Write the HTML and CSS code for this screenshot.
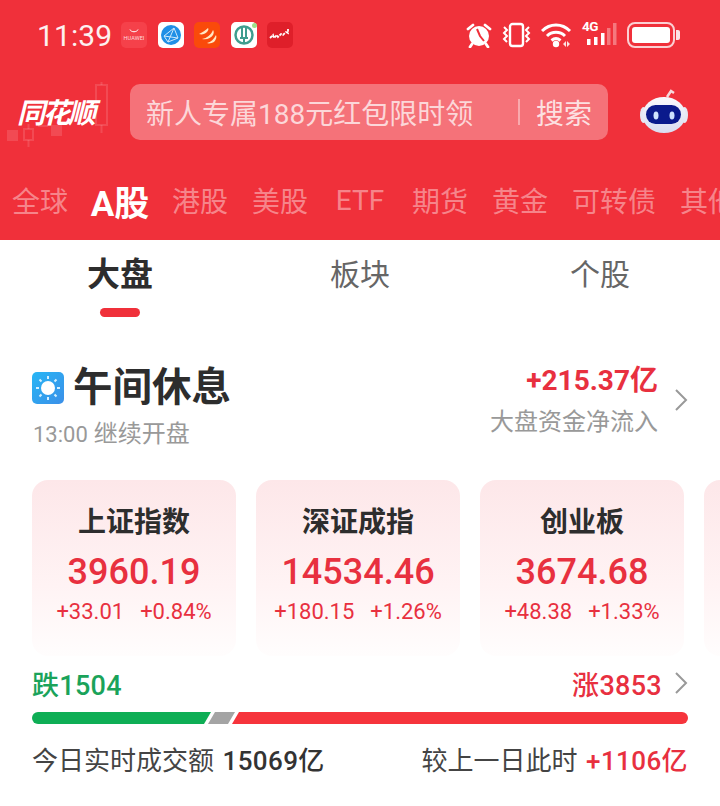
FILE: index.html
```html
<!DOCTYPE html>
<html lang="zh-CN">
<head>
<meta charset="utf-8">
<title>同花顺</title>
<link rel="stylesheet" href="styles.css">
</head>
<body>
<div class="page">
  <header class="hero">
    <div class="status">
      <span class="time">11:39</span>
      <div class="apps">
        <span class="app app-huawei"><svg width="14" height="6" viewBox="0 0 14 6"><path d="M3 0.5c1 3 7 3 8 0" fill="none" stroke="#fff" stroke-width="1"/></svg><i class="app-name">HUAWEI</i></span>
        <span class="app app-white"><svg width="24" height="24" viewBox="0 0 24 24"><circle cx="12" cy="12" r="10" fill="#1f8fe6"/><path d="M5 13L15 5L19 15L9 19ZM5 13L19 15M15 5L9 19" fill="none" stroke="#cfe9fb" stroke-width="1"/></svg></span>
        <span class="app app-orange"><svg width="26" height="26" viewBox="0 0 26 26"><path d="M5 12c4-2 7-4 9-6 1 1 0 3-1 4-2 2-5 3-8 2zM8 17c5-1 9-4 11-9 1 1 1 3 0 5-2 3-6 5-11 4zM13 21c4-1 7-4 9-8 1 2 0 5-2 7-2 1-5 2-7 1z" fill="#ffe9c4"/></svg></span>
        <span class="app app-white app-dot"><svg width="24" height="24" viewBox="0 0 24 24"><circle cx="12" cy="12" r="8.500" fill="none" stroke="#3f9d8f" stroke-width="2.500"/><path d="M10 5v10M14 5v10M8 15h8M12 15v6" fill="none" stroke="#3f9d8f" stroke-width="2"/></svg></span>
        <span class="app app-dark"><svg width="24" height="24" viewBox="0 0 24 24"><path d="M2 15l3-3 1 3 3-3 1 2 3-3 2 1 3-3 2 1V6" fill="none" stroke="#fff" stroke-width="1.800" stroke-dasharray="3 1"/></svg></span>
      </div>
      <div class="sys">
        <svg class="sys-alarm" width="26" height="26" viewBox="0 0 26 26"><circle cx="13" cy="14" r="10" fill="#fff"/><path d="M2 7l5-4M24 7l-5-4M6 22l-2 3M20 22l2 3" stroke="#fff" stroke-width="2.800" fill="none" stroke-linecap="round"/><path d="M11 7l3 7 4 5" stroke="#f0303a" stroke-width="2" fill="none"/></svg>
        <svg class="sys-vib" width="30" height="26" viewBox="0 0 30 26"><rect x="8" y="2" width="13" height="22" rx="2.500" fill="none" stroke="#fff" stroke-width="2.400"/><path d="M2 5l3 3-3 3 3 3-3 3 3 3M27 5l-3 3 3 3-3 3 3 3-3 3" fill="none" stroke="#fff" stroke-width="2"/></svg>
        <svg class="sys-wifi" width="31" height="26" viewBox="0 0 31 26"><path d="M1 9c8-8 20-8 28 0M6 14c5-5 13-5 18 0M10.500 18.500c3-2.500 6-2.500 9 0" fill="none" stroke="#fff" stroke-width="3"/><circle cx="15" cy="22" r="3.200" fill="#fff"/><path d="M22 22l3-3v6zM29 22l-3-3v6z" fill="#fff" opacity=".85"/></svg>
        <span class="signal"><span class="net">4G</span><svg width="35" height="26" viewBox="0 0 35 26"><path d="M5 17h3.500v6H5zM12 15h3.500v8H12zM19 11h3.500v12H19z" fill="#fff"/><path d="M25 6h3.500v17H25zM31 1h3.500v22H31z" fill="#fff" opacity=".35"/></svg></span>
        <span class="battery"><span class="battery-fill"></span></span><span class="battery-cap"></span>
      </div>
    </div>
    <div class="search-row">
      <div class="logo">
        <svg class="logo-candles" width="104" height="70" viewBox="0 0 104 70"><g fill="none" stroke="#fff" stroke-opacity=".13" stroke-width="2"><rect x="91" y="6" width="11" height="40"/><path d="M96.500 3v3M96.500 46v8"/><rect x="19" y="50" width="9" height="11"/><path d="M23.500 45v5M23.500 61v7"/></g><g fill="#fff" fill-opacity=".13"><rect x="2" y="51" width="11" height="11"/><rect x="46" y="46" width="11" height="11"/><rect x="33" y="46" width="10" height="2"/></g></svg>
        <span class="logo-text">同花顺</span>
      </div>
      <div class="search">
        <span class="search-text">新人专属188元红包限时领</span>
        <span class="search-btn">搜索</span>
      </div>
      <svg class="robot" width="50" height="48" viewBox="0 0 50 48"><defs><linearGradient id="robotBody" x1="0" y1="0" x2="0" y2="1"><stop offset="0" stop-color="#f9f9fd"/><stop offset="1" stop-color="#d9ddf0"/></linearGradient></defs><path d="M27 9l4-6 3 2" fill="none" stroke="#f6d9dc" stroke-width="2.500"/><ellipse cx="3.500" cy="27" rx="3.500" ry="8" fill="#e6e8f3"/><ellipse cx="44.500" cy="27" rx="3.500" ry="8" fill="#e6e8f3"/><ellipse cx="24" cy="27" rx="21.500" ry="18" fill="url(#robotBody)"/><rect x="6" y="17" width="35" height="19" rx="9.500" fill="#0a1a8c"/><ellipse cx="16" cy="27.500" rx="2.500" ry="4" fill="#cfe3ff"/><ellipse cx="32" cy="27.500" rx="2.500" ry="4" fill="#cfe3ff"/></svg>
    </div>
    <nav class="markets">
      <span class="market">全球</span>
      <span class="market market-on">A股</span>
      <span class="market">港股</span>
      <span class="market">美股</span>
      <span class="market">ETF</span>
      <span class="market">期货</span>
      <span class="market">黄金</span>
      <span class="market market-wide">可转债</span>
      <span class="market">其他</span>
    </nav>
  </header>

  <nav class="subtabs">
    <span class="subtab subtab-on">大盘</span>
    <span class="subtab">板块</span>
    <span class="subtab">个股</span>
  </nav>

  <section class="summary">
    <div class="summary-left">
      <div class="summary-title">
        <span class="sun"><svg width="32" height="32" viewBox="0 0 32 32"><circle cx="16" cy="16" r="7" fill="#fff"/><path d="M16 4v3M16 25v3M4 16h3M25 16h3M7.500 7.500l2 2M22.500 22.500l2 2M7.500 24.500l2-2M22.500 9.500l2-2" stroke="#d5f0ff" stroke-width="2" fill="none"/></svg></span>
        <h1 class="title">午间休息</h1>
      </div>
      <p class="subtitle"><span class="subtitle-time">13:00</span> 继续开盘</p>
    </div>
    <div class="flow">
      <div class="flow-text">
        <div class="flow-value">+215.37亿</div>
        <div class="flow-label">大盘资金净流入</div>
      </div>
      <svg class="chev" width="14" height="24" viewBox="0 0 14 24"><path d="M2 2l10 10L2 22" fill="none" stroke="#999" stroke-width="2"/></svg>
    </div>
  </section>

  <section class="cards">
    <article class="card">
      <h2 class="card-name">上证指数</h2>
      <div class="card-value">3960.19</div>
      <div class="card-delta"><span>+33.01</span><span>+0.84%</span></div>
    </article>
    <article class="card">
      <h2 class="card-name">深证成指</h2>
      <div class="card-value">14534.46</div>
      <div class="card-delta"><span>+180.15</span><span>+1.26%</span></div>
    </article>
    <article class="card">
      <h2 class="card-name">创业板</h2>
      <div class="card-value">3674.68</div>
      <div class="card-delta"><span>+48.38</span><span>+1.33%</span></div>
    </article>
    <article class="card"></article>
  </section>

  <section class="breadth">
    <div class="breadth-row">
      <span class="fall">跌1504</span>
      <span class="rise-wrap"><span class="rise">涨3853</span><svg class="chev" width="14" height="24" viewBox="0 0 14 24"><path d="M2 2l10 10L2 22" fill="none" stroke="#999" stroke-width="2"/></svg></span>
    </div>
    <div class="bar">
      <span class="bar-seg bar-green"></span>
      <span class="bar-seg bar-gray"></span>
      <span class="bar-seg bar-red"></span>
    </div>
    <div class="volume">
      <span class="vol-left">今日实时成交额 <b class="vol-num">15069亿</b></span>
      <span class="vol-right">较上一日此时 <b class="vol-up">+1106亿</b></span>
    </div>
  </section>
</div>
</body>
</html>
```
FILE: styles.css
```css
* { box-sizing: border-box; }
html, body { margin: 0; padding: 0; background: #fff; }
body {
  width: 720px; height: 806px; overflow: hidden;
  font-family: Roboto, "Noto Sans CJK SC", sans-serif;
  color: #333;
}
.page { width: 720px; }
h1, h2, p { margin: 0; }

.hero { height: 240px; background: #f0303a; overflow: hidden; }

.status { height: 70px; display: flex; align-items: center; padding: 0 40px 0 37px; color: #fff; }
.time { width: 84px; font-size: 30px; letter-spacing: .1px; color: #fdf0f0; }
.apps { display: flex; gap: 10.500px; }
.app {
  width: 26px; height: 26px; border-radius: 5px;
  display: flex; flex-direction: column; align-items: center; justify-content: center;
  position: relative; overflow: visible;
}
.app-huawei { background: #f5414a; }
.app-name { font-size: 5.500px; font-style: normal; color: #ffd9dc; line-height: 7px; letter-spacing: .1px; }
.app-white { background: #fff; }
.app-orange { background: #fa4a0a; }
.app-dark { background: #df1f2a; }
.app-dot::after {
  content: ""; position: absolute; top: 1px; right: 0; width: 5px; height: 5px;
  border-radius: 50%; background: #9fe08a;
}
.sys { margin-left: auto; display: flex; align-items: center; }
.sys-alarm { margin-right: 10px; }
.sys-vib { margin-right: 9px; }
.sys-wifi { margin-right: 10px; }
.signal { position: relative; display: block; width: 35px; height: 26px; margin-right: 10px; }
.signal svg { display: block; }
.net { position: absolute; left: 0; top: -4px; font-size: 13.500px; font-weight: 700; line-height: 16px; letter-spacing: -.6px; color: #fff; }
.battery {
  width: 48px; height: 26px; border: 2px solid #fbd0d3; border-radius: 8px; padding: 3px;
  display: block;
}
.battery-fill { display: block; width: 100%; height: 100%; background: #fff; border-radius: 3px; }
.battery-cap { display: block; width: 4px; height: 10px; margin-left: 1px; background: #fde3e5; border-radius: 0 2px 2px 0; }

.search-row { height: 56px; margin-top: 14px; display: flex; align-items: center; }
.logo { width: 130px; height: 56px; position: relative; flex: none; }
.logo-candles { position: absolute; left: 5px; top: -5px; }
.logo-text {
  position: absolute; left: 17px; top: 14px;
  font-size: 28px; line-height: 32px; font-weight: 700; font-style: italic; letter-spacing: -2.500px;
  color: #fff;
}
.search {
  width: 478px; height: 56px; border-radius: 10px; background: rgba(255,255,255,.32);
  display: flex; align-items: center; padding-left: 16px; flex: none;
}
.search-text { font-size: 28px; color: rgba(255,255,255,.72); width: 372px; white-space: nowrap; }
.search-btn {
  font-size: 28px; color: rgba(255,255,255,.8); position: relative; padding-left: 18px;
}
.search-btn::before {
  content: ""; position: absolute; left: 0; top: 7px; bottom: 7px; width: 2px;
  background: rgba(255,255,255,.4);
}
.robot { margin-left: 32px; flex: none; }

.markets { height: 100px; display: flex; align-items: center; gap: 24px; padding: 20px 0 0 12px; white-space: nowrap; }
.market { font-size: 28px; color: rgba(255,255,255,.42); flex: none; width: 56px; text-align: center; }
.market-wide { width: 84px; }
.market-on { font-size: 35px; font-weight: 700; color: #fff; width: 60px; margin: 0 -2px; }

.subtabs { display: flex; height: 80px; }
.subtab {
  width: 240px; height: 77px; display: flex; justify-content: center; align-items: center;
  padding-bottom: 14px; position: relative;
  font-size: 30px; color: #666;
}
.subtab-on { font-size: 33px; font-weight: 700; color: #2d2d2d; }
.subtab-on::after {
  content: ""; position: absolute; left: 100px; width: 40px; height: 9px; bottom: 0;
  background: #f0303a; border-radius: 5px;
}

.summary { height: 117px; margin-top: 43px; padding: 0 32px; display: flex; justify-content: space-between; }
.summary-title { display: flex; align-items: center; gap: 9px; height: 50px; }
.sun {
  width: 32px; height: 32px; border-radius: 5px;
  background: linear-gradient(135deg, #27b6f5, #3c8fe8);
  display: block;
}
.sun svg { display: block; }
.title { font-size: 39.500px; line-height: 50px; font-weight: 700; color: #2d2d2d; }
.subtitle { margin-top: 6px; font-size: 24px; line-height: 30px; color: #999; padding-left: 1px; }
.subtitle-time { font-size: 22px; }
.flow { display: flex; align-items: center; gap: 16px; height: 84px; margin-top: -5px; }
.flow-text { text-align: right; padding-top: 2px; }
.flow-value { font-size: 28px; line-height: 36px; font-weight: 700; color: #e8303f; }
.flow-label { font-size: 24px; line-height: 34px; margin-top: 6px; color: #999; white-space: nowrap; }
.chev { display: block; flex: none; }

.cards { display: flex; gap: 20px; padding-left: 32px; width: 720px; overflow: hidden; }
.card {
  width: 204px; height: 176px; flex: none; border-radius: 16px;
  background: linear-gradient(180deg, #fde7e9 0%, #fff3f4 60%, #fffdfd 100%);
  text-align: center; padding-top: 25px;
}
.card-name { font-size: 28px; line-height: 36px; font-weight: 700; color: #2d2d2d; }
.card-value { font-size: 36px; line-height: 46px; margin-top: 8px; font-weight: 500; color: #e8303f; }
.card-delta { display: flex; justify-content: center; gap: 16px; margin-top: 3px; font-size: 22px; line-height: 28px; color: #e8303f; }

.breadth { padding: 10px 32px 0; }
.breadth-row { display: flex; justify-content: space-between; align-items: center; height: 34px; }
.fall { font-size: 27px; font-weight: 500; color: #1aa35a; letter-spacing: .3px; }
.rise-wrap { display: flex; align-items: center; gap: 12px; }
.rise { font-size: 27px; font-weight: 500; color: #e8303f; letter-spacing: .3px; }
.bar { display: flex; height: 12px; margin-top: 12px; }
.bar-seg { display: block; height: 12px; }
.bar-green { width: 179px; background: #0eae55; border-radius: 6px 0 0 6px; clip-path: polygon(0 0, 100% 0, 172px 100%, 0 100%); }
.bar-gray { width: 27px; margin-left: -3px; background: #a4a4a4; clip-path: polygon(7px 0, 100% 0, 20px 100%, 0 100%); }
.bar-red { flex: 1; margin-left: -3px; background: #f6343c; border-radius: 0 6px 6px 0; clip-path: polygon(7px 0, 100% 0, 100% 100%, 0 100%); }
.volume { display: flex; justify-content: space-between; align-items: center; margin-top: 17px; height: 34px; font-size: 26px; color: #444; word-spacing: 2px; }
.vol-num { font-weight: 500; color: #333; letter-spacing: .4px; }
.vol-up { font-weight: 500; color: #e8303f; letter-spacing: .4px; }
```
